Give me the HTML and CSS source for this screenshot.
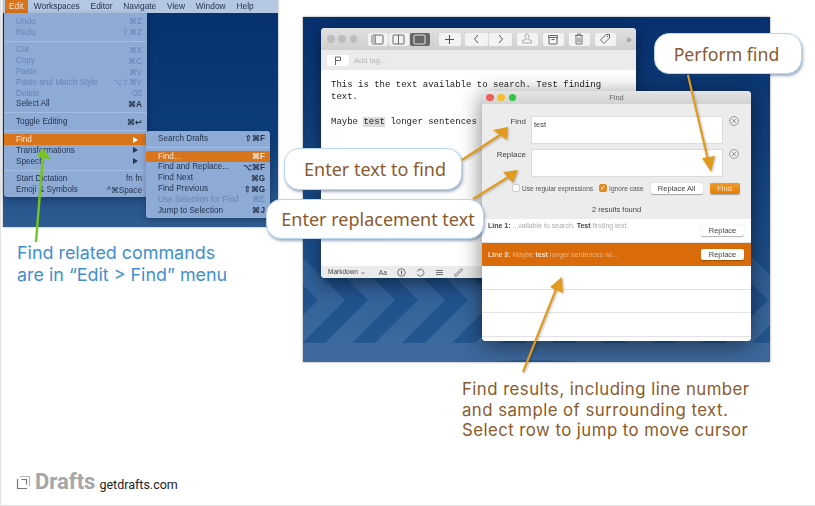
FILE: index.html
```html
<!DOCTYPE html>
<html lang="en">
<head>
  <meta charset="UTF-8">
  <title>Find in Drafts</title>
  <link rel="stylesheet" href="styles.css">
</head>
<body>
<div class="canvas">

  <!-- left shot: menus -->
  <div class="shot shot-menu">
    <div class="menubar">
      <span class="mb-item on">Edit</span>
      <span class="mb-item">Workspaces</span>
      <span class="mb-item">Editor</span>
      <span class="mb-item">Navigate</span>
      <span class="mb-item">View</span>
      <span class="mb-item">Window</span>
      <span class="mb-item">Help</span>
    </div>
  </div>

  <div class="menu menu-edit">
    <div class="row off"><span>Undo</span><span>⌘Z</span></div>
    <div class="row off"><span>Redo</span><span>⇧⌘Z</span></div>
    <div class="sep"></div>
    <div class="row off"><span>Cut</span><span>⌘X</span></div>
    <div class="row off"><span>Copy</span><span>⌘C</span></div>
    <div class="row off"><span>Paste</span><span>⌘V</span></div>
    <div class="row off"><span>Paste and Match Style</span><span>⌥⇧⌘V</span></div>
    <div class="row off"><span>Delete</span><span>⌫</span></div>
    <div class="row"><span>Select All</span><span class="key">⌘A</span></div>
    <div class="sep"></div>
    <div class="row"><span>Toggle Editing</span><span class="key">⌘↩</span></div>
    <div class="sep"></div>
    <div class="row sel"><span>Find</span><span class="tri"></span></div>
    <div class="row"><span>Transformations</span><span class="tri"></span></div>
    <div class="row"><span>Speech</span><span class="tri"></span></div>
    <div class="sep"></div>
    <div class="row"><span>Start Dictation</span><span>fn fn</span></div>
    <div class="row"><span>Emoji &amp; Symbols</span><span>^⌘Space</span></div>
  </div>

  <div class="menu menu-find">
    <div class="row"><span>Search Drafts</span><span class="key">⇧⌘F</span></div>
    <div class="sep"></div>
    <div class="row sel"><span>Find...</span><span class="key">⌘F</span></div>
    <div class="row"><span>Find and Replace...</span><span class="key">⌥⌘F</span></div>
    <div class="row"><span>Find Next</span><span class="key">⌘G</span></div>
    <div class="row"><span>Find Previous</span><span class="key">⇧⌘G</span></div>
    <div class="row off"><span>Use Selection for Find</span><span>⌘E</span></div>
    <div class="row"><span>Jump to Selection</span><span class="key">⌘J</span></div>
  </div>

  <p class="note-blue">Find related commands<br>are in “Edit &gt; Find” menu</p>

  <!-- right shot: desktop with the two windows -->
  <div class="shot shot-app">
    <svg class="wallpaper" width="467" height="345" viewBox="0 0 467 345">
      <defs>
        <linearGradient id="wall" x1="0" y1="0" x2="0" y2="1">
          <stop offset="0" stop-color="#06306e"/>
          <stop offset="1" stop-color="#1c4d88"/>
        </linearGradient>
        <linearGradient id="band" x1="0" y1="0" x2="0" y2="1">
          <stop offset="0" stop-color="#1c4d88"/>
          <stop offset="1" stop-color="#25568f"/>
        </linearGradient>
        <linearGradient id="light" x1="0" y1="0" x2="0" y2="1">
          <stop offset="0" stop-color="#2a5b94"/>
          <stop offset="1" stop-color="#3c6a9e"/>
        </linearGradient>
        <path id="chev" d="M-28 240h27l43 43-43 43h-27l43-43z" fill="url(#light)"/>
      </defs>
      <rect width="467" height="240" fill="url(#wall)"/>
      <rect y="240" width="467" height="86" fill="url(#band)"/>
      <use href="#chev" x="0"/>
      <use href="#chev" x="50"/>
      <use href="#chev" x="100"/>
      <use href="#chev" x="150"/>
      <use href="#chev" x="200"/>
      <use href="#chev" x="250"/>
      <use href="#chev" x="300"/>
      <use href="#chev" x="350"/>
      <use href="#chev" x="400"/>
      <use href="#chev" x="450"/>
      <use href="#chev" x="500"/>
      <rect y="326" width="467" height="19" fill="#3d699d"/>
      <ellipse cx="232" cy="352" rx="70" ry="9" fill="#2a5889"/>
    </svg>

    <div class="win win-draft">
      <div class="toolbar">
        <span class="dot grey"></span><span class="dot grey"></span><span class="dot grey"></span>
        <div class="seg seg-view">
          <span class="tb"><svg width="13" height="11" viewBox="0 0 13 11"><rect x="1" y="1" width="11" height="9" rx="1" fill="none" stroke="#666"/><path d="M4.500 1v9" stroke="#666"/><rect x="1" y="1" width="3.500" height="9" fill="#bbb"/></svg></span>
          <span class="tb"><svg width="13" height="11" viewBox="0 0 13 11"><rect x="1" y="1" width="11" height="9" rx="1" fill="none" stroke="#666"/><path d="M6.500 1v9" stroke="#666"/></svg></span>
          <span class="tb dark"><svg width="13" height="11" viewBox="0 0 13 11"><rect x="1" y="1" width="11" height="9" rx="1" fill="none" stroke="#e4e4e4"/></svg></span>
        </div>
        <span class="tb wide"><svg width="11" height="11" viewBox="0 0 11 11"><path d="M5.500 1v9M1 5.500h9" stroke="#555" stroke-width="1.100"/></svg></span>
        <div class="seg seg-nav">
          <span class="tb"><svg width="7" height="10" viewBox="0 0 7 10"><path d="M5 1L1.500 5 5 9" fill="none" stroke="#555"/></svg></span>
          <span class="tb"><svg width="7" height="10" viewBox="0 0 7 10"><path d="M2 1l3.500 4L2 9" fill="none" stroke="#555"/></svg></span>
        </div>
        <span class="tb solo"><svg width="12" height="12" viewBox="0 0 12 12"><path d="M6 1a2 2 0 0 1 2 2c0 1-.5 2-1 2.500v1l3.500 1V10h-9V7.500l3.500-1v-1C4.500 5 4 4 4 3a2 2 0 0 1 2-2z" fill="none" stroke="#aaa"/></svg></span>
        <span class="tb solo"><svg width="12" height="11" viewBox="0 0 12 11"><path d="M1.500 1.500h9v2h-9zM2 3.500h8V10H2zM4.500 5.500h3" fill="none" stroke="#666"/></svg></span>
        <span class="tb solo"><svg width="10" height="12" viewBox="0 0 10 12"><path d="M1 2.500h8M3.500 2.500V1h3v1.500M2 2.500V11h6V2.500M4 4.500v5M6 4.500v5" fill="none" stroke="#777"/></svg></span>
        <span class="tb solo"><svg width="12" height="12" viewBox="0 0 12 12"><path d="M7 1.500h3.500V5L5 10.500 1.500 7z" fill="none" stroke="#666"/><circle cx="8.500" cy="3.500" r=".7" fill="#666"/></svg></span>
        <span class="more">»</span>
      </div>
      <div class="tagbar">
        <span class="flag"><svg width="8" height="9" viewBox="0 0 8 9"><path d="M1.500 9V1h5v3.500h-5" fill="none" stroke="#666"/></svg></span>
        <span class="addtag">Add tag...</span>
      </div>
      <div class="editor">
        <p>This is the text available to search. Test finding<br>text.</p>
        <p>Maybe <mark>test</mark> longer sentences</p>
      </div>
      <div class="statusbar">
        <span class="st-lang">Markdown ⌄</span>
        <span class="st-aa">Aa</span>
        <svg width="9" height="9" viewBox="0 0 9 9"><circle cx="4.500" cy="4.500" r="3.800" fill="none" stroke="#555" stroke-width=".8"/><path d="M4.500 2.500v4" stroke="#555"/></svg>
        <svg width="9" height="9" viewBox="0 0 9 9"><path d="M2.500 1.700A3.500 3.500 0 1 1 1.200 6" fill="none" stroke="#555" stroke-width=".8"/><path d="M.8 3.500L2.500 1.700l1.300 1.300" fill="none" stroke="#555" stroke-width=".6"/></svg>
        <svg width="9" height="9" viewBox="0 0 9 9"><path d="M1 2.500h7M1 4.500h7M1 6.500h7" stroke="#555" stroke-width=".8"/></svg>
        <svg width="9" height="9" viewBox="0 0 9 9"><rect x="-2.200" y="-1" width="4.400" height="2.200" rx="1.100" transform="translate(2.500 6.500) rotate(-45)" fill="none" stroke="#555" stroke-width=".7"/><rect x="-2.200" y="-1" width="4.400" height="2.200" rx="1.100" transform="translate(6.500 2.500) rotate(-45)" fill="none" stroke="#555" stroke-width=".7"/></svg>
      </div>
    </div>

    <div class="win win-find">
      <div class="titlebar">
        <span class="dot red"></span><span class="dot yellow"></span><span class="dot green"></span>
        <span class="title">Find</span>
      </div>
      <div class="form">
        <div class="field-row">
          <label>Find</label>
          <div class="field">test</div>
          <svg class="clear" width="10" height="10" viewBox="0 0 10 10"><circle cx="5" cy="5" r="4.400" fill="none" stroke="#777" stroke-width=".7"/><path d="M3 3l4 4M7 3l-4 4" stroke="#777" stroke-width=".7"/></svg>
        </div>
        <div class="field-row">
          <label>Replace</label>
          <div class="field"></div>
          <svg class="clear" width="10" height="10" viewBox="0 0 10 10"><circle cx="5" cy="5" r="4.400" fill="none" stroke="#777" stroke-width=".7"/><path d="M3 3l4 4M7 3l-4 4" stroke="#777" stroke-width=".7"/></svg>
        </div>
        <div class="options">
          <span class="check"></span><span class="opt">Use regular expressions</span>
          <span class="check checked">✓</span><span class="opt">Ignore case</span>
          <span class="btn btn-all">Replace All</span>
          <span class="btn btn-find">Find</span>
        </div>
        <div class="count">2 results found</div>
      </div>
      <div class="results">
        <div class="result first">
          <span class="line"><b>Line 1:</b> ...vailable to search. <b>Test</b> finding text.</span>
          <span class="btn btn-rep">Replace</span>
        </div>
        <div class="result picked">
          <span class="line"><b>Line 3:</b> Maybe <b>test</b> longer sentences wi...</span>
          <span class="btn btn-rep">Replace</span>
        </div>
        <div class="result"></div>
        <div class="result"></div>
        <div class="result"></div>
      </div>
    </div>
  </div>

  <div class="callout c-find">Enter text to find</div>
  <div class="callout c-replace">Enter replacement text</div>
  <div class="callout c-perform">Perform find</div>

  <p class="note-brown">Find results, including line number<br>and sample of surrounding text.<br>Select row to jump to move cursor</p>

  <!-- arrows lie over everything -->
  <svg class="arrows" width="815" height="506" viewBox="0 0 815 506">
    <g class="arrow-green">
      <path d="M36 242L43 155" stroke="#76c61a" stroke-width="2.400"/>
      <path d="M43 148L51 160 37 156z" fill="#76c61a"/>
    </g>
    <g class="arrow-orange">
      <path d="M462 160L500 135" stroke="#e09a1e" stroke-width="2.200"/>
      <path d="M508 127L507 140 493 130z" fill="#e09a1e"/>
      <path d="M473 199L510 176" stroke="#e09a1e" stroke-width="2.200"/>
      <path d="M518 170L513 183 503 172z" fill="#e09a1e"/>
      <path d="M688 75L708 160" stroke="#e09a1e" stroke-width="2.200"/>
      <path d="M711 172L702 158 715 156z" fill="#e09a1e"/>
      <path d="M523 372L557 287" stroke="#e09a1e" stroke-width="2.200"/>
      <path d="M562 277L563 293 550 287z" fill="#e09a1e"/>
    </g>
  </svg>

  <div class="brand">
    <svg width="15" height="15" viewBox="0 0 15 15"><path d="M4 1.500h9.500V11" fill="none" stroke="#b5b5b5" stroke-width="1.200"/><path d="M1.500 4v9.500H11M5.500 4.500h5v5" fill="none" stroke="#777" stroke-width="1.200"/></svg>
    <span class="brand-name">Drafts</span>
    <span class="brand-url">getdrafts.com</span>
  </div>
</div>
</body>
</html>
```
FILE: styles.css
```css
* {
  box-sizing: border-box;
}

html, body {
  margin: 0;
  padding: 0;
  background: #fff;
}

.canvas {
  position: relative;
  width: 815px;
  height: 506px;
  overflow: hidden;
  background: #fff;
  border-left: 1px solid #e2e2e2;
  border-bottom: 1px solid #e2e2e2;
  font-family: "Liberation Sans", sans-serif;
}

p {
  margin: 0;
}

.shot {
  position: absolute;
  filter: blur(.3px);
}

.shot-menu {
  left: 2px;
  top: 0;
  width: 275px;
  height: 227px;
  background: linear-gradient(#06306e, #0d3d7a 60%, #2f5c92);
  box-shadow: 0 0 2px rgba(0, 0, 0, .4);
}

.menubar {
  display: flex;
  height: 13px;
  padding-left: 2px;
  background: #b4c7e3;
  font-size: 8.400px;
  line-height: 13px;
  color: #24344d;
}

.mb-item {
  padding: 0 5.400px;
}

.mb-item.on {
  background: #d8741c;
  color: #f4e6d6;
  padding: 0 5px 0 4px;
}

.menu {
  position: absolute;
  background: #8eabd6;
  font-size: 8.200px;
  color: #24344d;
  padding-top: 2px;
  border-radius: 0 0 3px 3px;
  box-shadow: 0 2px 6px rgba(0, 0, 0, .25);
  filter: blur(.3px);
}

.menu-edit {
  left: 3px;
  top: 13px;
  width: 143px;
  height: 184px;
  padding-top: 3px;
}

.menu-find {
  left: 145px;
  top: 131px;
  width: 124px;
  height: 87px;
  border-radius: 3px;
}

.row {
  display: flex;
  justify-content: space-between;
  align-items: center;
  height: 10.800px;
  padding: 0 5px 0 12px;
  white-space: nowrap;
}

.row.off {
  color: #6585b5;
}

.row.sel {
  background: #d8741c;
  color: #f6e7d8;
}

.key {
  font-weight: bold;
}

.sep {
  height: 1px;
  margin: 3px 0;
  background: #a5bde0;
}

.tri {
  width: 0;
  height: 0;
  margin-right: 4px;
  border-left: 5px solid #24344d;
  border-top: 3px solid transparent;
  border-bottom: 3px solid transparent;
}

.row.sel .tri {
  border-left-color: #fff;
}

.note-blue {
  position: absolute;
  left: 16px;
  top: 242px;
  font-family: Inter, sans-serif;
  font-size: 17.900px;
  line-height: 22px;
  color: #3f8fd2;
}

.shot-app {
  left: 302px;
  top: 17px;
  width: 467px;
  height: 345px;
  overflow: hidden;
  box-shadow: 0 0 2px rgba(0, 0, 0, .5);
}

.wallpaper {
  display: block;
  position: absolute;
  left: 0;
  top: 0;
}

.win {
  position: absolute;
  display: flex;
  flex-direction: column;
  background: #fff;
  border-radius: 4px;
}

.win-draft {
  left: 18px;
  top: 11px;
  width: 315px;
  height: 250px;
  box-shadow: 0 6px 16px rgba(0, 0, 0, .45);
}

.toolbar {
  display: flex;
  align-items: center;
  height: 22px;
  padding-left: 6px;
  background: linear-gradient(#e0e0e0, #cfcfcf);
  border-radius: 4px 4px 0 0;
}

.dot {
  width: 7.500px;
  height: 7.500px;
  margin-right: 3.800px;
  border-radius: 50%;
}

.dot.grey { background: #bdbdbd; }
.dot.red { background: #ec5f57; }
.dot.yellow { background: #f5bd2f; }
.dot.green { background: #2fc443; }

.seg {
  display: flex;
  gap: 1px;
}

.seg-view {
  margin-left: 7px;
}

.seg-nav {
  margin-left: 4px;
}

.tb {
  display: flex;
  align-items: center;
  justify-content: center;
  width: 20px;
  height: 13px;
  background: #f3f3f3;
  border-radius: 2px;
}

.tb.dark {
  background: #666;
}

.tb.wide {
  width: 22px;
  margin-left: 9px;
}

.seg-nav .tb {
  width: 23px;
}

.tb.solo {
  width: 21px;
  margin-left: 5px;
}

.more {
  margin-left: 10px;
  font-size: 10px;
  color: #777;
}

.tagbar {
  display: flex;
  align-items: center;
  height: 20px;
  padding-left: 6px;
  background: #ebebeb;
}

.flag {
  display: flex;
  align-items: center;
  justify-content: center;
  width: 22px;
  height: 11px;
  background: #fff;
  border-radius: 2px;
}

.addtag {
  margin-left: 5px;
  font-size: 7.500px;
  color: #b5b5b5;
}

.editor {
  flex: 1;
  padding: 9px 10px;
  font-family: "Liberation Mono", monospace;
  font-size: 9px;
  line-height: 12.400px;
  color: #222;
}

.editor p {
  margin-bottom: 12.400px;
}

.editor mark {
  background: #dcdcdc;
  color: #222;
}

.statusbar {
  display: flex;
  align-items: center;
  gap: 10px;
  height: 12px;
  padding-left: 7px;
  background: #ebebeb;
  border-radius: 0 0 4px 4px;
  font-size: 6.500px;
  color: #444;
}

.st-aa {
  margin-left: 3px;
}

.win-find {
  left: 179px;
  top: 74px;
  width: 269px;
  height: 250px;
  box-shadow: 0 4px 22px rgba(0, 0, 0, .5);
}

.titlebar {
  position: relative;
  display: flex;
  align-items: center;
  flex: none;
  height: 13px;
  padding-left: 4px;
  background: linear-gradient(#e4e4e4, #d2d2d2);
  border-radius: 4px 4px 0 0;
}

.title {
  position: absolute;
  left: 0;
  right: 0;
  text-align: center;
  font-size: 7.500px;
  color: #666;
}

.form {
  flex: none;
  height: 115px;
  padding-top: 12px;
  background: #ececec;
  font-size: 7.500px;
  color: #444;
}

.field-row {
  display: flex;
  align-items: flex-start;
  height: 28px;
  margin-bottom: 5px;
}

.field-row label {
  width: 44px;
  padding-top: 1px;
  text-align: right;
  font-size: 8px;
}

.field {
  width: 192px;
  height: 28px;
  margin-left: 5px;
  padding: 3px 2px;
  background: #fff;
  border: 1px solid #dcdcdc;
  font-size: 7.500px;
}

.clear {
  margin: 0 0 0 6px;
}

.options {
  display: flex;
  align-items: center;
  height: 12px;
  padding-left: 30px;
}

.check {
  display: flex;
  align-items: center;
  justify-content: center;
  width: 8px;
  height: 8px;
  background: #fff;
  border: 1px solid #ccc;
  border-radius: 2px;
}

.check.checked {
  margin-left: 6px;
  background: #e08a1e;
  border-color: #e08a1e;
  color: #fff;
  font-size: 7px;
}

.opt {
  margin-left: 2px;
  font-size: 6.600px;
  color: #555;
  white-space: nowrap;
}

.btn {
  display: flex;
  align-items: center;
  justify-content: center;
  background: #fff;
  border-radius: 2px;
  box-shadow: 0 .5px 1px rgba(0, 0, 0, .3);
  font-size: 7.500px;
  color: #444;
}

.btn-all {
  width: 52px;
  height: 11px;
  margin-left: 7px;
}

.btn-find {
  width: 30px;
  height: 11px;
  margin-left: 7px;
  background: linear-gradient(#f09a2a, #e57f08);
  color: #fbe3c4;
}

.count {
  margin-top: 11px;
  text-align: center;
  font-size: 7.500px;
}

.results {
  flex: 1;
  background: #fff;
  border-radius: 0 0 4px 4px;
  overflow: hidden;
}

.result {
  display: flex;
  justify-content: space-between;
  align-items: center;
  height: 23.500px;
  padding: 0 7px 0 6px;
  border-bottom: 1px solid #e2e2e2;
  font-size: 7px;
  color: #aaa;
}

.result b {
  color: #444;
}

.result.first {
  align-items: flex-start;
  padding-top: 3px;
}

.result.picked {
  background: #d96b0a;
  border-bottom: 0;
  color: #f1b27e;
}

.result.picked b {
  color: #fbe3cf;
}

.btn-rep {
  width: 43px;
  height: 11px;
}

.first .btn-rep {
  margin-top: 3px;
}

.callout {
  position: absolute;
  display: flex;
  align-items: center;
  justify-content: center;
  background: #fff;
  border: 1px solid #b9d5f0;
  border-radius: 15px;
  box-shadow: 1px 2px 3px rgba(40, 70, 110, .45);
  font-family: "Noto Sans", sans-serif;
  font-size: 18px;
  color: #8a5a2d;
  white-space: nowrap;
}

.c-find {
  left: 283px;
  top: 148px;
  width: 178px;
  height: 42px;
  padding-left: 4px;
}

.c-replace {
  left: 265px;
  top: 199px;
  width: 218px;
  height: 40px;
  padding-left: 6px;
}

.c-perform {
  left: 653px;
  top: 33px;
  width: 148px;
  height: 41px;
  padding-right: 3px;
  font-size: 17.700px;
}

.note-brown {
  position: absolute;
  left: 461px;
  top: 379px;
  font-family: Inter, sans-serif;
  font-size: 16.800px;
  line-height: 20.500px;
  letter-spacing: .45px;
  color: #8a5a2d;
  white-space: nowrap;
}

.arrows {
  position: absolute;
  left: -1px;
  top: 0;
  pointer-events: none;
}

.arrow-orange {
  filter: drop-shadow(1px 1px 1px rgba(0, 0, 0, .25));
}

.brand {
  position: absolute;
  left: 15px;
  top: 468px;
  display: flex;
  align-items: center;
}

.brand-name {
  margin-left: 4px;
  font-family: Roboto, sans-serif;
  font-weight: 700;
  font-size: 22px;
  line-height: 28px;
  color: #a6a6a6;
}

.brand-url {
  margin: 5px 0 0 4px;
  font-family: Roboto, sans-serif;
  font-size: 12.500px;
  color: #222;
}
```
